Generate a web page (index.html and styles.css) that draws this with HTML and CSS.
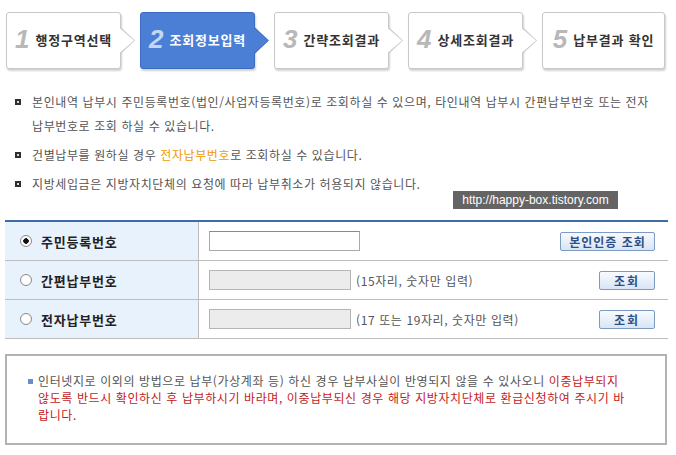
FILE: index.html
```html
<!DOCTYPE HTML>
<html lang="ko">
  <head>
    <title>지방세 납부 - 조회정보입력</title>
    <meta charset="utf-8">
    <link rel="stylesheet" href="styles.css">
  </head>
  <body>

  <div class="page">

    <ol class="steps">
      <li class="step"><span class="num">1</span>행정구역선택</li>
      <li class="step on"><span class="num">2</span>조회정보입력</li>
      <li class="step"><span class="num">3</span>간략조회결과</li>
      <li class="step"><span class="num">4</span>상세조회결과</li>
      <li class="step last"><span class="num">5</span>납부결과 확인</li>
    </ol>

    <ul class="guide">
      <li>본인내역 납부시 주민등록번호(법인/사업자등록번호)로 조회하실 수 있으며, 타인내역 납부시 간편납부번호 또는 전자납부번호로 조회 하실 수 있습니다.</li>
      <li>건별납부를 원하실 경우 <em class="hl">전자납부번호</em>로 조회하실 수 있습니다.</li>
      <li>지방세입금은 지방자치단체의 요청에 따라 납부취소가 허용되지 않습니다.</li>
    </ul>

    <span class="watermark">http://happy-box.tistory.com</span>

    <table class="search">
      <tr>
        <th><label><input type="radio" name="kind" class="radio" checked> 주민등록번호</label></th>
        <td>
          <div class="field">
            <input type="text" class="text">
            <button class="btn wide">본인인증 조회</button>
          </div>
        </td>
      </tr>
      <tr>
        <th><label><input type="radio" name="kind" class="radio"> 간편납부번호</label></th>
        <td>
          <div class="field">
            <input type="text" class="text off" disabled>
            <span class="hint">(15자리, 숫자만 입력)</span>
            <button class="btn">조회</button>
          </div>
        </td>
      </tr>
      <tr>
        <th><label><input type="radio" name="kind" class="radio"> 전자납부번호</label></th>
        <td>
          <div class="field">
            <input type="text" class="text off" disabled>
            <span class="hint">(17 또는 19자리, 숫자만 입력)</span>
            <button class="btn">조회</button>
          </div>
        </td>
      </tr>
    </table>

    <div class="notice">
      <p>인터넷지로 이외의 방법으로 납부(가상계좌 등) 하신 경우 납부사실이 반영되지 않을 수 있사오니 <span class="warn">이중납부되지</span> <span class="warn">않도록 반드시 확인하신 후 납부하시기 바라며, 이중납부되신 경우 해당 지방자치단체로 환급신청하여 주시기 바랍니다.</span></p>
    </div>

  </div>

  </body>
</html>
```

FILE: styles.css
```css
html {
  background: #fff;
}
body {
  margin: 0;
  padding: 0;
  font-family: "Noto Sans CJK KR", sans-serif;
  font-size: 12px;
  letter-spacing: 0.6px;
  color: #555;
}

.page {
  position: relative;
  width: 676px;
  height: 455px;
  overflow: hidden;
}

/* step bar */
.steps {
  display: flex;
  gap: 19px;
  margin: 0;
  padding: 12px 0 0 6px;
  list-style: none;
}
.step {
  position: relative;
  display: flex;
  align-items: center;
  justify-content: center;
  gap: 6px;
  box-sizing: border-box;
  width: 115px;
  height: 57px;
  padding-bottom: 3px;
  border: 1px solid #c8c8c8;
  border-radius: 3px;
  background: #fff;
  box-shadow: 1px 2px 2px rgba(0,0,0,0.18);
  font-size: 13px;
  font-weight: bold;
  letter-spacing: 0.8px;
  color: #333;
}
.step.last {
  width: 123px;
}
.step::before,
.step::after {
  content: "";
  position: absolute;
  top: 50%;
  clip-path: polygon(0 0, 100% 50%, 0 100%);
}
.step::before {
  left: 100%;
  width: 15px;
  height: 28px;
  margin-top: -14px;
  background: #c8c8c8;
}
.step::after {
  left: calc(100% - 1px);
  width: 15px;
  height: 26px;
  margin-top: -13px;
  background: #fff;
}
.step.last::before,
.step.last::after {
  display: none;
}
.step .num {
  font-family: "Liberation Sans", Arial, sans-serif;
  font-size: 26px;
  font-style: italic;
  font-weight: bold;
  line-height: 1;
  letter-spacing: 0;
  color: #b8b8b8;
}
.step.on {
  background: #4b7fd6;
  border-color: #3e6cbf;
  color: #fff;
}
.step.on::before {
  background: #3e6cbf;
}
.step.on::after {
  background: #4b7fd6;
}
.step.on .num {
  color: #c3d6f4;
}

/* guide text */
.guide {
  margin: 21px 0 0;
  padding: 0 16px 0 32px;
  list-style: none;
  line-height: 24px;
}
.guide li {
  text-indent: -17px;
}
.guide li + li {
  margin-top: 5px;
}
.guide li::before {
  content: "";
  display: inline-block;
  box-sizing: border-box;
  width: 6px;
  height: 6px;
  margin-right: 11px;
  border: 2px solid #2f2f2f;
  background: #d8d8d8;
  vertical-align: 2px;
}
.hl {
  font-style: normal;
  color: #f09a00;
}

.watermark {
  position: absolute;
  left: 453px;
  top: 191px;
  width: 165px;
  height: 18px;
  background: #646464;
  color: #fff;
  font-family: "Liberation Sans", Arial, sans-serif;
  font-size: 12px;
  line-height: 18px;
  letter-spacing: 0;
  text-align: center;
}

/* search table */
.search {
  width: 663px;
  margin: 24px 0 0 5px;
  border-collapse: separate;
  border-spacing: 0;
  border-top: 2px solid #3f6ca6;
}
.search th,
.search td {
  height: 38px;
  padding: 0;
  border-bottom: 1px solid #bdbdbd;
}
.search th {
  width: 194px;
  padding-left: 15px;
  box-sizing: border-box;
  background: #e8f2fc;
  border-right: 1px solid #bdbdbd;
  text-align: left;
  font-size: 13px;
  letter-spacing: 0.8px;
  color: #222;
}
.search label {
  display: flex;
  align-items: center;
  gap: 9px;
}
.radio {
  appearance: none;
  width: 12px;
  height: 12px;
  margin: 0;
  border: 1px solid #8c8c8c;
  border-radius: 50%;
  background: radial-gradient(circle, #fff 55%, #e4e4e4);
}
.radio:checked {
  background: radial-gradient(circle, #111 0 2.5px, #fff 3px 60%, #e4e4e4);
}
.search td {
  padding: 0 13px 0 10px;
}
.field {
  display: flex;
  align-items: center;
  gap: 5px;
}
.text {
  box-sizing: border-box;
  width: 151px;
  height: 20px;
  margin: 0;
  border: 1px solid #aaa;
  border-top-color: #8a8a8a;
  background: #fff;
}
.text.off {
  width: 142px;
  background: #ececec;
  border-color: #b5b5b5;
}
.hint {
  color: #555;
}
.btn {
  margin-left: auto;
  box-sizing: border-box;
  width: 56px;
  height: 19px;
  padding: 0;
  border: 1px solid #7d9ac3;
  border-radius: 2px;
  background: linear-gradient(#f8fbff, #d8e5f4);
  font-family: "Noto Sans CJK KR", sans-serif;
  font-size: 12px;
  font-weight: bold;
  line-height: 17px;
  letter-spacing: 2px;
  color: #2d4f87;
}
.btn.wide {
  width: 95px;
  letter-spacing: 1px;
}

/* notice box */
.notice {
  box-sizing: border-box;
  width: 662px;
  height: 91px;
  margin: 15px 0 0 5px;
  padding: 16px 34px 0 31px;
  border: 2px solid #b3b3b3;
  line-height: 17px;
}
.notice p {
  margin: 0;
  text-indent: -10px;
}
.notice p::before {
  content: "";
  display: inline-block;
  width: 5px;
  height: 5px;
  margin-right: 5px;
  background: #6b8ec6;
  vertical-align: 2px;
}
.warn {
  color: #c41a1a;
}
```
